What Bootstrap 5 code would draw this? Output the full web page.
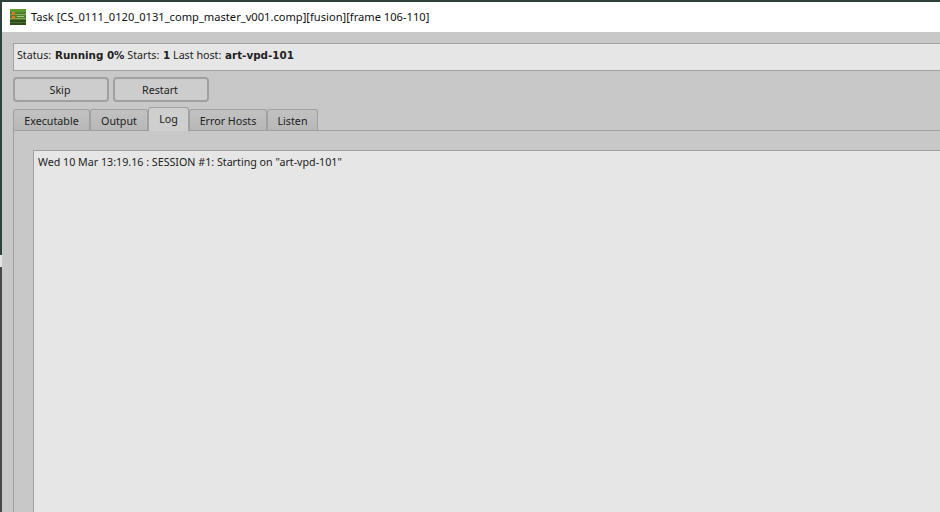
<!DOCTYPE html>
<html lang="en">
<head>
<meta charset="utf-8">
<title>Task</title>
<link href="https://cdn.jsdelivr.net/npm/bootstrap@5.3.0/dist/css/bootstrap.min.css" rel="stylesheet">
<style>
html,body{height:512px;overflow:hidden;}
body{background:#c8c8c8;font-family:"Noto Sans","Liberation Sans",sans-serif;font-size:10.7px;color:#222;}
.win-shell{height:512px;width:960px;padding:2px 0 0 2px;display:flex;flex-direction:column;background:linear-gradient(to bottom,#2f4239 0,#2f4239 255px,#e4e4e4 255px,#e4e4e4 267px,#47484a 267px,#47484a 512px);}
.title-strip{height:30px;background:#fff;color:#111;font-size:11.13px;padding-left:8px;gap:5px;flex:none;}
.app-ico{width:16px;height:16px;flex:none;}
.work-area{flex:1;padding:11px 0 0 11px;min-height:0;display:flex;flex-direction:column;background:#c8c8c8;}
.stat-frame{height:28px;background:#e6e6e6;border:1px solid #a0a0a0;border-right:0;padding:0 0 3px 3px;flex:none;font-size:10.7px;}
.stat-frame b{font-family:"DejaVu Sans",sans-serif;font-weight:700;font-size:10.35px;margin-left:1px;}
.btn-row{gap:4px;margin-top:6px;flex:none;}
.qt-btn{width:96px;height:25px;padding:1px 2px 0 0;font-size:10.7px;color:#222;background:#cdcdcd;border:2px solid #a0a0a0;border-radius:4px;}
.qt-tabs{height:22px;margin-top:6px;flex:none;align-items:flex-end;border:0;}
.qt-tab{height:21px;background:linear-gradient(#c2c2c2,#b8b8b8);border:1px solid #a0a0a0;border-bottom:0;border-radius:3px 3px 0 0;font-size:10.7px;display:flex;align-items:center;justify-content:center;color:#222;padding-top:2px;}
.qt-tab.now{height:24px;background:#cfcfcf;margin-bottom:-1px;position:relative;z-index:1;padding:0 0 1px;}
.tab-exec{width:77px;}
.tab-out{width:58px;}
.tab-log{width:41px;}
.tab-err{width:78px;}
.tab-lis{width:51px;}
.pane-box{flex:1;min-height:0;border-left:1px solid #a0a0a0;border-top:1px solid #a0a0a0;padding:19px 0 0 19px;}
.log-box{height:100%;background:#e6e6e6;border-left:1px solid #a0a0a0;border-top:1px solid #a0a0a0;padding:3px 0 0 4px;font-size:10.7px;}
</style>
</head>
<body>
<div class="win-shell">
  <div class="title-strip d-flex align-items-center">
    <svg class="app-ico" viewBox="0 0 16 16" aria-hidden="true">
      <rect width="16" height="16" fill="#4f7f2a"/>
      <rect y="0" width="16" height="3" fill="#5e9a32"/>
      <rect y="5" width="16" height="1" fill="#83a85c"/>
      <rect y="9" width="16" height="1" fill="#83a85c"/>
      <rect y="11" width="16" height="5" fill="#2c4a1a"/>
      <rect y="13" width="16" height="1" fill="#4d6f33"/>
      <rect x="2" y="3" width="3" height="3" fill="#e0762a"/>
      <rect x="2" y="7" width="3" height="3" fill="#e0762a"/>
      <rect x="7" y="7" width="7" height="1" fill="#a8c67a"/>
    </svg>
    <span>Task [CS_0111_0120_0131_comp_master_v001.comp][fusion][frame 106-110]</span>
  </div>
  <div class="work-area">
    <div class="stat-frame d-flex align-items-center">
      <span>Status:&nbsp;<b>Running 0%</b>&nbsp;Starts:&nbsp;<b>1</b>&nbsp;Last host:&nbsp;<b>art-vpd-101</b></span>
    </div>
    <div class="btn-row d-flex">
      <button type="button" class="btn qt-btn">Skip</button>
      <button type="button" class="btn qt-btn">Restart</button>
    </div>
    <div class="qt-tabs d-flex">
      <div class="qt-tab tab-exec">Executable</div>
      <div class="qt-tab tab-out">Output</div>
      <div class="qt-tab now tab-log">Log</div>
      <div class="qt-tab tab-err">Error Hosts</div>
      <div class="qt-tab tab-lis">Listen</div>
    </div>
    <div class="pane-box">
      <div class="log-box">Wed 10 Mar 13:19.16 : SESSION #1: Starting on "art-vpd-101"</div>
    </div>
  </div>
</div>
</body>
</html>
